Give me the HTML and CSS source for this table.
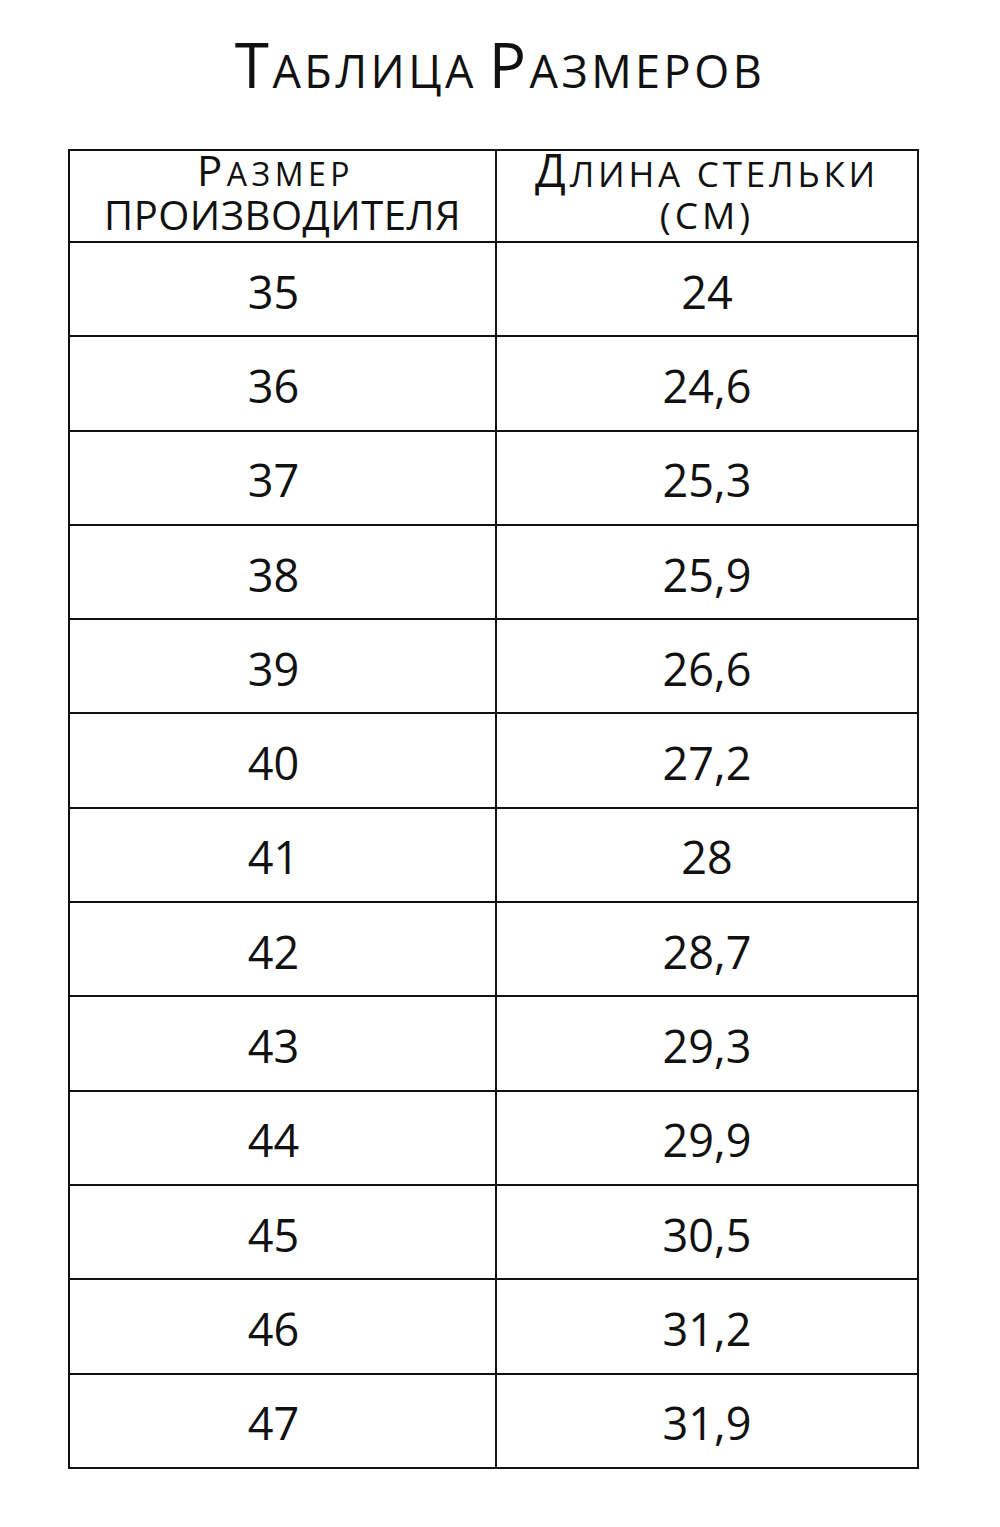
FILE: index.html
```html
<!DOCTYPE html>
<html lang="ru">
<head>
<meta charset="utf-8">
<title>Таблица Размеров</title>
<link rel="stylesheet" href="styles.css">
</head>
<body>
<div class="page">
  <h1 class="title"><span class="big">Т</span><span class="sc">аблица</span> <span class="big">Р</span><span class="sc">азмеров</span></h1>
  <table class="sizes">
    <thead>
      <tr>
        <th class="h1c">
          <div class="hl1"><span class="hbig">Р</span><span class="hsc">азмер</span></div>
          <div class="hl2">производителя</div>
        </th>
        <th class="h2c">
          <div class="hr1"><span class="rbig">Д</span><span class="rsc">лина стельки</span></div>
          <div class="hr2">(см)</div>
        </th>
      </tr>
    </thead>
    <tbody>
      <tr><td>35</td><td>24</td></tr>
      <tr><td>36</td><td>24,6</td></tr>
      <tr><td>37</td><td>25,3</td></tr>
      <tr><td>38</td><td>25,9</td></tr>
      <tr><td>39</td><td>26,6</td></tr>
      <tr><td>40</td><td>27,2</td></tr>
      <tr><td>41</td><td>28</td></tr>
      <tr><td>42</td><td>28,7</td></tr>
      <tr><td>43</td><td>29,3</td></tr>
      <tr><td>44</td><td>29,9</td></tr>
      <tr><td>45</td><td>30,5</td></tr>
      <tr><td>46</td><td>31,2</td></tr>
      <tr><td>47</td><td>31,9</td></tr>
    </tbody>
  </table>
</div>
</body>
</html>
```

FILE: styles.css
```css
html, body {
  margin: 0;
  padding: 0;
  background: #ffffff;
}

body {
  font-family: "Open Sans", "Noto Sans", "DejaVu Sans", sans-serif;
  color: #111111;
}

.page {
  width: 1000px;
  padding-top: 24px;
}

.title {
  margin: 0;
  height: 125px;
  text-align: center;
  font-weight: 400;
  line-height: 80px;
  letter-spacing: 3.5px;
  white-space: nowrap;
}

.title .big {
  font-size: 62px;
}

.title .sc {
  font-size: 45px;
  text-transform: uppercase;
}

.sizes {
  margin-left: 68px;
  width: 851px;
  border-collapse: collapse;
  table-layout: fixed;
}

.sizes th,
.sizes td {
  border: 2px solid #111111;
  text-align: center;
  padding: 0;
  font-weight: 400;
}

.sizes th.h1c {
  width: 425px;
}

.sizes th {
  height: 90px;
  vertical-align: top;
}

.hl1 {
  height: 43px;
  line-height: 38px;
  white-space: nowrap;
  letter-spacing: 4.5px;
  padding-right: 14px;
}

.hbig {
  font-size: 42px;
}

.hsc {
  font-size: 32px;
  text-transform: uppercase;
}

.hl2 {
  font-size: 40px;
  line-height: 42px;
  text-transform: uppercase;
  white-space: nowrap;
  letter-spacing: 0.5px;
}

.hr1 {
  height: 43px;
  line-height: 38px;
  white-space: nowrap;
  letter-spacing: 3.8px;
}

.rbig {
  font-size: 45px;
}

.rsc {
  font-size: 35px;
  text-transform: uppercase;
}

.hr2 {
  font-size: 37px;
  line-height: 42px;
  text-transform: uppercase;
  letter-spacing: 4px;
}

.sizes td {
  height: 88.3px;
  font-size: 45px;
  line-height: 1;
  padding-top: 4px;
}

.sizes td:first-child {
  padding-right: 18px;
}
```
